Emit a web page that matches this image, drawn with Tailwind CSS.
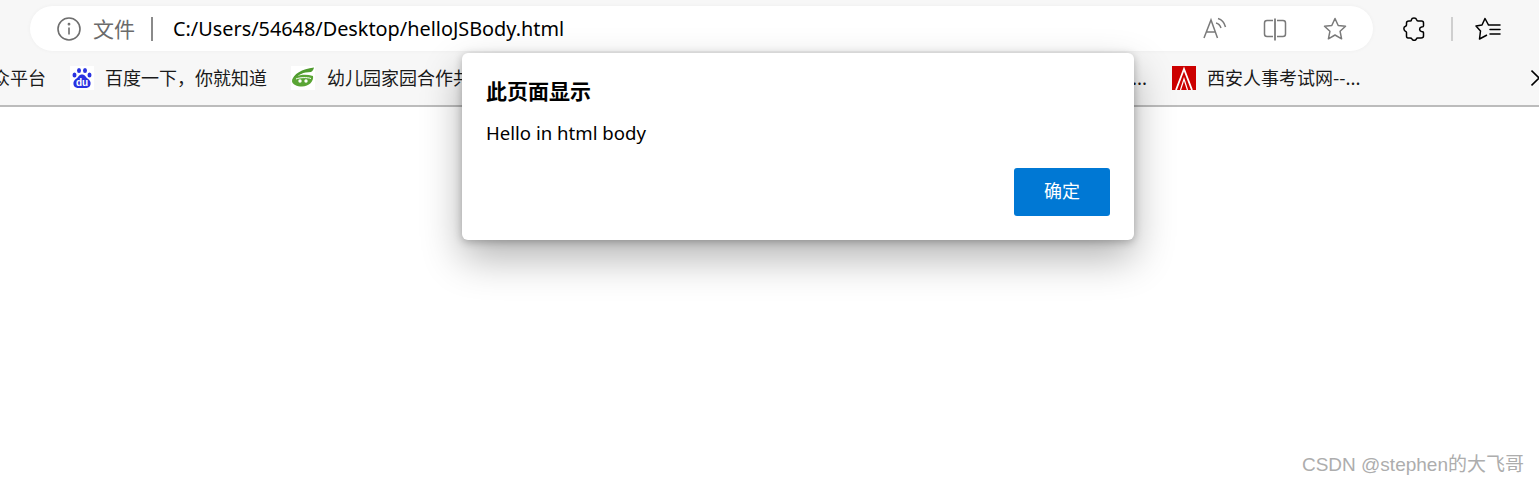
<!DOCTYPE html>
<html lang="zh-CN">

<head>
    <meta charset="UTF-8">
    <title>helloJSBody</title>
    <script src="https://cdn.jsdelivr.net/npm/@tailwindcss/browser@4"></script>
</head>

<body class="bg-white overflow-hidden font-['Noto_Sans','Noto_Sans_CJK_SC',sans-serif]">
    <div class="relative w-[1539px] h-[484px] overflow-hidden">
        <!-- browser chrome -->
        <header class="h-[107px] bg-[#f7f7f7] border-b-2 border-[#bcbcbc]">
            <div class="flex items-center h-[57px]">
                <div class="ml-[30px] w-[1343px] h-[45px] bg-white rounded-full flex items-center shadow-[0_0_4px_rgba(0,0,0,0.04)]">
                    <svg class="ml-[27px] w-6 h-6 text-[#6e6e6e]" viewBox="0 0 24 24" fill="none" stroke="currentColor" stroke-width="1.6">
                        <circle cx="12" cy="12" r="11"/>
                        <path d="M12 10.5v7"/>
                        <circle cx="12" cy="7.2" r="0.6"/>
                    </svg>
                    <span class="ml-[12px] text-[21px] text-[#6b6b6b] font-['Noto_Sans_CJK_SC',sans-serif]">文件</span>
                    <span class="ml-[16px] w-[2px] h-6 bg-[#8a8a8a]"></span>
                    <span class="ml-[20px] text-[19.85px] text-black font-['Noto_Sans',sans-serif]">C:/Users/54648/Desktop/helloJSBody.html</span>
                    <div class="ml-auto flex items-center mr-[26px] gap-[36px] text-[#7a7a7a]">
                        <svg class="w-6 h-6" viewBox="0 0 24 24" fill="none" stroke="currentColor" stroke-width="1.5">
                            <path d="M1 21 8 3l6.500 18M3.500 15h8.500"/>
                            <path d="M13 6c2.500.5 4 2 5 5M15 1.500c3.500 1 6.500 4.500 7.500 8.500"/>
                        </svg>
                        <svg class="w-6 h-6" viewBox="0 0 24 24" fill="none" stroke="currentColor" stroke-width="1.500">
                            <path d="M10 3.500H4A2.500 2.500 0 0 0 1.500 6v11A2.500 2.500 0 0 0 4 19.500h6M14 3.500h6A2.500 2.500 0 0 1 22.500 6v11a2.500 2.500 0 0 1-2.500 2.500h-6"/>
                            <path d="M12 1.500v22" stroke-width="1.800"/>
                        </svg>
                        <svg class="w-6 h-6" viewBox="0 0 24 24" fill="none" stroke="currentColor" stroke-width="1.500">
                            <path d="M12 1.500l3.200 7 7.300.800-5.400 5 1.500 7.500-6.600-3.800-6.600 3.800 1.500-7.500-5.400-5 7.300-.800z" stroke-linejoin="round"/>
                        </svg>
                    </div>
                </div>
                <svg class="ml-[30px] w-6 h-6 text-black" viewBox="0 0 24 24" fill="none" stroke="currentColor" stroke-width="1.500" stroke-linejoin="round">
                    <path d="M7.500 4C8 4 8.500 3.500 8.500 2.500 9 .5 13 .5 13.500 2.500 13.800 3.500 14 4 15 4h3.500C20 4 20.500 5 20.500 6v3c0 1-1 1-2 1-2.500.5-2.500 4 0 4.500 1 0 2 .5 2 1.500v3c0 1.500-1 2-2.500 2h-3.500c-1 0-1 1-1.500 1.500-1 1.300-3.500 1-4-.5-.5-1-.5-1-2-1H5c-1 0-1.500-1-1.500-2v-3.500c0-1-1-1-1.500-1.500-1.500-1-1.500-4 0-4.500 1-.5 1.500-.5 1.500-1.500V6c0-1.500 1-2 2.500-2z"/>
                </svg>
                <span class="ml-[24px] w-[2px] h-6 bg-[#cfcfcf]"></span>
                <svg class="ml-[22px] w-[26px] h-6 text-black" viewBox="0 0 26 24" fill="none" stroke="currentColor" stroke-width="1.500" stroke-linejoin="round">
                    <path d="M13.500 8 10 1.500 7 8l-6 1 4.500 5-1 8 7.500-4"/>
                    <path d="M13.500 8H25M15 12.500h10M15 17h10" stroke-linecap="round"/>
                </svg>
            </div>
            <!-- favorites bar -->
            <nav class="flex items-center h-[42px] text-[18px] text-[#1a1a1a] font-['Noto_Sans_CJK_SC',sans-serif] whitespace-nowrap">
                <div class="w-[46px] overflow-hidden flex justify-end shrink-0 -mt-[2px]">
                    <span class="shrink-0">众平台</span>
                </div>
                <div class="ml-[24px] flex items-center">
                    <svg class="w-6 h-6 bg-white" viewBox="0 0 24 24" fill="#2932e1">
                        <ellipse cx="4.500" cy="9" rx="2" ry="2.500"/>
                        <ellipse cx="9" cy="4.500" rx="2" ry="2.500"/>
                        <ellipse cx="15" cy="4.500" rx="2" ry="2.500"/>
                        <ellipse cx="19.500" cy="9" rx="2" ry="2.500"/>
                        <path d="M12 8.500c3 0 3.500 2.500 5.500 4 2.500 1.500 3.500 3.500 3 6-.5 3-3.500 4-8.500 3.500-5 .5-8-.5-8.500-3.500-.5-2.500.5-4.500 3-6 2-1.500 2.500-4 5.500-4z"/>
                        <text x="12" y="20" text-anchor="middle" fill="#fff" font-size="10" font-weight="bold" font-family="Liberation Sans, sans-serif">du</text>
                    </svg>
                    <span class="ml-[11px] -mt-[2px]">百度一下，你就知道</span>
                </div>
                <div class="ml-[24px] flex items-center">
                    <svg class="w-6 h-6 bg-white" viewBox="0 0 24 24">
                        <path d="M1 15C2 8 11 3 23 1.500c-.5 2-1.500 3.500-3 4.500C12 6 7 9 5 12z" fill="#4f9b2f"/>
                        <path d="M1 15c.5-2 2-3.500 4-4.500 4-2 11-2.500 17-.5 1 5-4 10.500-11 10.500-5 0-10-2-10-5.500z" fill="#5aa535"/>
                        <path d="M5 13c3-1.500 11-2 15-.5" stroke="#fff" stroke-width="1" fill="none"/>
                        <circle cx="9" cy="15" r="1.700" fill="#fff"/>
                        <circle cx="15" cy="15" r="1.700" fill="#fff"/>
                    </svg>
                    <span class="ml-[12px] -mt-[2px]">幼儿园家园合作共</span>
                </div>
                <span class="ml-[520px] w-[156px] text-right shrink-0 -mt-[2px]">...</span>
                <div class="ml-[25px] flex items-center">
                    <svg class="w-6 h-6" viewBox="0 0 24 24" fill="none">
                        <rect width="24" height="24" fill="#cc0000"/>
                        <path d="M4 24 12 3l8 21" stroke="#fff" stroke-width="1.800"/>
                        <path d="M8.500 24 12 13l3.500 11" stroke="#fff" stroke-width="1.200"/>
                    </svg>
                    <span class="ml-[11px] -mt-[2px]">西安人事考试网--...</span>
                </div>
                <svg class="ml-auto w-[8px] h-[18px] mr-0 text-black shrink-0" viewBox="0 0 8 18" fill="none" stroke="currentColor" stroke-width="1.600">
                    <path d="M0.500 1.500 8 9 0.500 16.500"/>
                </svg>
            </nav>
        </header>

        <!-- alert dialog -->
        <div class="absolute left-[462px] top-[53px] w-[672px] h-[187px] bg-white rounded-[6px] px-6 pt-[22px] shadow-[0_18px_40px_rgba(0,0,0,0.3),0_2px_8px_rgba(0,0,0,0.25)]">
            <h1 class="text-[21px] leading-[30px] font-bold text-black font-['Noto_Sans_CJK_SC',sans-serif]">此页面显示</h1>
            <p class="mt-[15px] text-[18.6px] leading-[26px] text-black font-['Noto_Sans',sans-serif]">Hello in html body</p>
            <div class="flex justify-end mt-[22px]">
                <button class="w-[96px] h-[48px] pb-[3px] bg-[#0078d4] text-white text-[18px] rounded-[3px] font-['Noto_Sans_CJK_SC',sans-serif]">确定</button>
            </div>
        </div>

        <div class="absolute right-[15px] top-[451px] text-[19px] leading-[28px] text-[#adadad] font-['Liberation_Sans','Noto_Sans_CJK_SC',sans-serif]">CSDN @stephen的大飞哥</div>
    </div>
</body>

</html>
